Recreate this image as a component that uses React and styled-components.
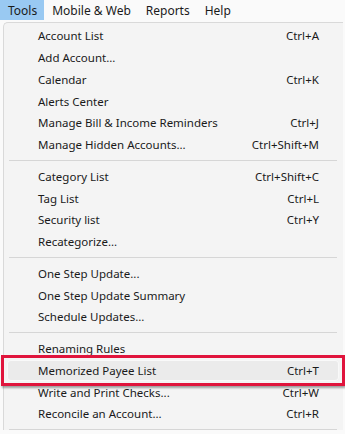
import React from "react";
import styled, { createGlobalStyle } from "styled-components";

const GlobalStyle = createGlobalStyle`
  html, body {
    margin: 0;
    padding: 0;
    background: #fafafa;
  }
  body {
    font-family: "Noto Sans", "Open Sans", sans-serif;
    font-size: 11.5px;
    color: #1a1a1a;
  }
`;

const Page = styled.div`
  width: 345px;
  height: 434px;
  overflow: hidden;
  background: #fafafa;
`;

// Top menu bar
const MenuBar = styled.div`
  display: flex;
  height: 21px;
  background: #fafafa;
`;

const BarItem = styled.div`
  display: flex;
  align-items: center;
  padding: 0 7px 0 8px;
  height: 20px;
  font-size: 12px;
  background: ${(p) => (p.$active ? "#99c9f2" : "transparent")};
`;

// Dropdown panel
const Panel = styled.div`
  margin: 1px 2px 0 3px;
  background: #f4f4f4;
  border: 1px solid #d9d9d9;
  border-right: none;
  border-bottom: none;
  border-top-left-radius: 5px;
  padding-top: 2px;
`;

const Item = styled.div`
  position: relative;
  display: flex;
  align-items: center;
  justify-content: space-between;
  height: 21.75px;
  padding: 0 24px 0 34px;
  margin: ${(p) => (p.$hover ? "0 4px 0 3px" : "0")};
  ${(p) =>
    p.$hover &&
    `
    padding: 0 20px 0 31px;
    background: #ebebeb;
    border-radius: 4px;
    box-shadow: inset 0 0 0 1px #f9f9f9;
  `}
  &::after {
    content: "";
    display: ${(p) => (p.$hover ? "block" : "none")};
    position: absolute;
    left: -6px;
    right: -6px;
    top: -5px;
    bottom: -5px;
    border: 3px solid #e0143c;
    box-shadow: 1px 2px 2px rgba(0, 0, 0, 0.35);
    pointer-events: none;
  }
`;

const Label = styled.span`
  white-space: nowrap;
`;

const Shortcut = styled.span`
  white-space: nowrap;
`;

const Separator = styled.div`
  height: 1px;
  background: #d6d6d6;
  margin: 4px 6px 5px 5px;
`;

const groups = [
  [
    ["Account List", "Ctrl+A"],
    ["Add Account...", ""],
    ["Calendar", "Ctrl+K"],
    ["Alerts Center", ""],
    ["Manage Bill & Income Reminders", "Ctrl+J"],
    ["Manage Hidden Accounts...", "Ctrl+Shift+M"],
  ],
  [
    ["Category List", "Ctrl+Shift+C"],
    ["Tag List", "Ctrl+L"],
    ["Security list", "Ctrl+Y"],
    ["Recategorize...", ""],
  ],
  [
    ["One Step Update...", ""],
    ["One Step Update Summary", ""],
    ["Schedule Updates...", ""],
  ],
  [
    ["Renaming Rules", ""],
    ["Memorized Payee List", "Ctrl+T"],
    ["Write and Print Checks...", "Ctrl+W"],
    ["Reconcile an Account...", "Ctrl+R"],
  ],
];

const App = () => {
  return (
    <Page>
      <GlobalStyle />
      <MenuBar>
        <BarItem $active>Tools</BarItem>
        <BarItem>Mobile &amp; Web</BarItem>
        <BarItem>Reports</BarItem>
        <BarItem>Help</BarItem>
      </MenuBar>
      <Panel>
        {groups.map((group, gi) => (
          <React.Fragment key={gi}>
            {gi > 0 && <Separator />}
            {group.map(([label, key]) => (
              <Item key={label} $hover={label === "Memorized Payee List"}>
                <Label>{label}</Label>
                <Shortcut>{key}</Shortcut>
              </Item>
            ))}
          </React.Fragment>
        ))}
        <Separator />
      </Panel>
    </Page>
  );
};

export default App;
